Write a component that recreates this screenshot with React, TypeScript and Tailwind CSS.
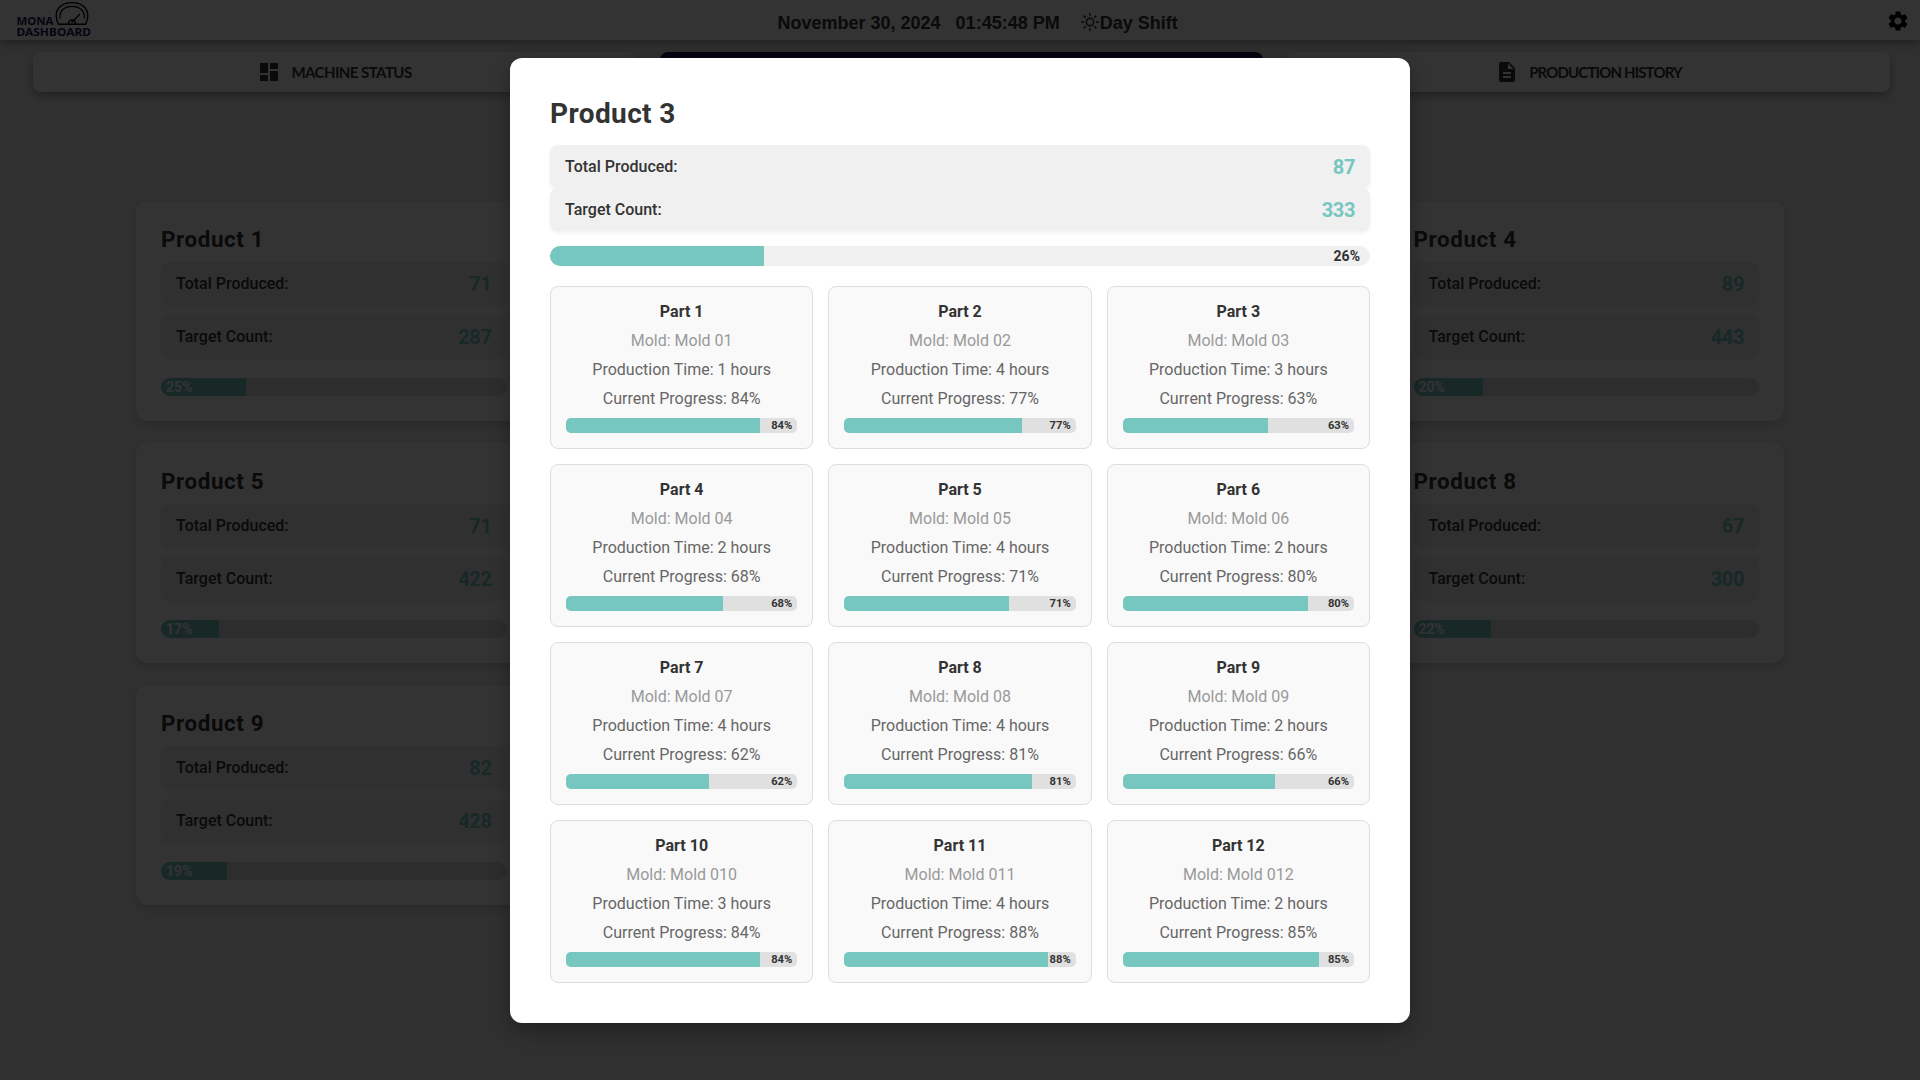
import { MdDashboard, MdSettings } from "react-icons/md";

const products = [
  { id: 1, made: 71, target: 287 },
  { id: 2, made: 64, target: 310 },
  { id: 3, made: 87, target: 333 },
  { id: 4, made: 89, target: 443 },
  { id: 5, made: 71, target: 422 },
  { id: 6, made: 75, target: 350 },
  { id: 7, made: 80, target: 390 },
  { id: 8, made: 67, target: 300 },
  { id: 9, made: 82, target: 428 },
];

const parts = [
  [1, 84], [4, 77], [3, 63], [2, 68], [4, 71], [2, 80],
  [4, 62], [4, 81], [2, 66], [3, 84], [4, 88], [2, 85],
];

function Stat({ label, value }: { label: string; value: number }) {
  return (
    <div className="flex h-[43px] items-center justify-between rounded-[8px] bg-[#f0f0f0] px-[15px] shadow-[0_2px_4px_rgba(0,0,0,0.06)]">
      <span className="text-[16px] font-medium text-[#333]">{label}</span>
      <span className="text-[20px] leading-[24px] font-bold tracking-[-0.4px] text-[#76c7c0]">{value}</span>
    </div>
  );
}

function ProductCard({ id, made, target }: { id: number; made: number; target: number }) {
  const pct = (made / target) * 100;
  return (
    <div className="h-[220px] rounded-[12px] bg-white p-[25px] shadow-[0_4px_12px_rgba(0,0,0,0.15)]">
      <h2 className="mb-[10px] h-[26px] text-[22.4px] leading-[26px] font-bold tracking-[0.6px] text-[#333]">Product {id}</h2>
      <div className="flex flex-col gap-[10px]">
        <Stat label="Total Produced:" value={made} />
        <Stat label="Target Count:" value={target} />
      </div>
      <div className="mt-[20px] h-[18px] overflow-hidden rounded-[9px] bg-[#e0e0e0]">
        <div className="flex h-full items-center bg-[#76c7c0] pl-[5px] text-[14px] font-bold text-white" style={{ width: `${pct}%` }}>
          {Math.round(pct)}%
        </div>
      </div>
    </div>
  );
}

function Logo() {
  return (
    <svg className="ml-[16px] h-[40px] w-[76px]" viewBox="16 0 76 40">
      <g fill="none" stroke="#000" strokeLinecap="round">
        <path d="M58.500 24.300H85.500C89 17 88.500 10 82.500 5.500C77 1.700 67 1.700 61.500 5.500C55.500 10 55 17 58.500 24.300Z" strokeWidth="1.400" />
        <path d="M60 18C59.500 11 64 6.300 72 6.300S84.700 11 84.300 18" strokeWidth="1.300" />
        <path d="M72 22L79.500 14.500M68.500 23.500A3.500 3.500 0 0 1 75.500 23.500" strokeWidth="1.400" />
      </g>
      <g fill="#1b1464" fontFamily="Noto Sans, sans-serif" fontWeight="700" fontSize="11">
        <text x="16.500" y="25" textLength="37" lengthAdjust="spacingAndGlyphs">MONA</text>
        <text x="16.500" y="35.800" textLength="74.500" lengthAdjust="spacingAndGlyphs">DASHBOARD</text>
      </g>
    </svg>
  );
}

function Sun() {
  return (
    <svg className="-mt-[2px] mr-px h-[18px] w-[18px]" viewBox="0 0 18 18" fill="none" stroke="#333" strokeWidth="1.500">
      <circle cx="9" cy="9" r="3.700" />
      <path d="M9 0V3M9 15V18M0 9H3M15 9H18M2.600 2.600L4.600 4.600M13.400 13.400L15.400 15.400M2.600 15.400L4.600 13.400M13.400 4.600L15.400 2.600" />
    </svg>
  );
}

function DocIcon() {
  return (
    <svg className="mx-[4px] h-[20px] w-[16px]" viewBox="0 0 16 20" fill="#333">
      <path fillRule="evenodd" d="M2 0H10L16 6V18A2 2 0 0 1 14 20H2A2 2 0 0 1 0 18V2A2 2 0 0 1 2 0ZM9 1.500V7H14.500ZM4 10V12H12V10ZM4 14V16H12V14Z" />
    </svg>
  );
}

const tab = "flex h-[40px] items-center justify-center rounded-[8px] bg-white text-[#333] shadow-[0_4px_8px_rgba(0,0,0,0.3)]";
const tabText = "ml-[10px] pt-px font-['Lato'] text-[15px] font-bold";

export default function App() {
  return (
    <div className="relative h-[1080px] w-[1920px] overflow-hidden bg-[#f0f0f0] font-['Roboto',sans-serif]">
      <header className="flex h-[40px] items-center bg-white shadow-[0_4px_8px_rgba(0,0,0,0.3)]">
        <Logo />
        <div className="ml-[685.5px] flex items-center pt-[6px] font-['Liberation_Sans'] text-[18px] font-bold whitespace-pre text-[#333]">
          <span>November 30, 2024</span>
          <span className="ml-[15px]">01:45:48 PM</span>
          <span className="ml-[21px] flex items-center"><Sun />Day Shift</span>
        </div>
        <div className="ml-auto pt-[2px] pr-[10px]"><MdSettings size={24} color="#000" /></div>
      </header>
      <nav className="mt-[12px] ml-[33px] grid w-[1857px] grid-cols-3 gap-[24px]">
        <div className={tab}>
          <MdDashboard size={24} />
          <span className={`${tabText} tracking-[-0.55px]`}>MACHINE STATUS</span>
        </div>
        <div className="h-[40px] rounded-[8px] bg-[#14104b] shadow-[0_4px_8px_rgba(0,0,0,0.3)]" />
        <div className={tab}>
          <DocIcon />
          <span className={`${tabText} tracking-[-0.85px]`}>PRODUCTION HISTORY</span>
        </div>
      </nav>
      <main className="mt-[109px] ml-[136px] grid w-[1648px] grid-cols-4 gap-[22px]">
        {products.map((p) => <ProductCard key={p.id} {...p} />)}
      </main>

      <div className="absolute inset-0 flex items-start justify-center bg-black/80 pt-[58px]">
        <section className="h-[965px] w-[900px] rounded-[12px] bg-white p-[40px] shadow-[0_8px_20px_rgba(0,0,0,0.3)]">
          <h1 className="mb-[15px] h-[32px] text-[28px] leading-[32px] font-bold tracking-[0.4px] text-[#333]">Product 3</h1>
          <Stat label="Total Produced:" value={87} />
          <Stat label="Target Count:" value={333} />
          <div className="relative mt-[15px] h-[20px] overflow-hidden rounded-[10px] bg-[#f0f0f0]">
            <div className="h-full w-[214px] bg-[#76c7c0]" />
            <span className="absolute inset-y-0 right-[10px] text-[14px] leading-[20px] font-bold text-[#333]">26%</span>
          </div>
          <div className="mt-[20px] grid grid-cols-3 gap-[15px]">
            {parts.map(([hours, pct], i) => (
              <article key={i} className="flex h-[163px] flex-col gap-[10px] rounded-[8px] border border-[#ddd] bg-[#f9f9f9] p-[15px] text-center text-[16px] leading-[19px] text-[#666]">
                <h3 className="font-bold text-[#333]">Part {i + 1}</h3>
                <p className="text-[#999]">Mold: Mold 0{i + 1}</p>
                <p>Production Time: {hours} hours</p>
                <p>Current Progress: {pct}%</p>
                <div className="relative h-[15px] overflow-hidden rounded-[5px] bg-[#e0e0e0]">
                  <div className="h-full bg-[#76c7c0]" style={{ width: `${pct}%` }} />
                  <span className="absolute inset-y-0 right-[5px] text-[11.2px] leading-[15px] font-bold text-[#333]">{pct}%</span>
                </div>
              </article>
            ))}
          </div>
        </section>
      </div>
    </div>
  );
}
